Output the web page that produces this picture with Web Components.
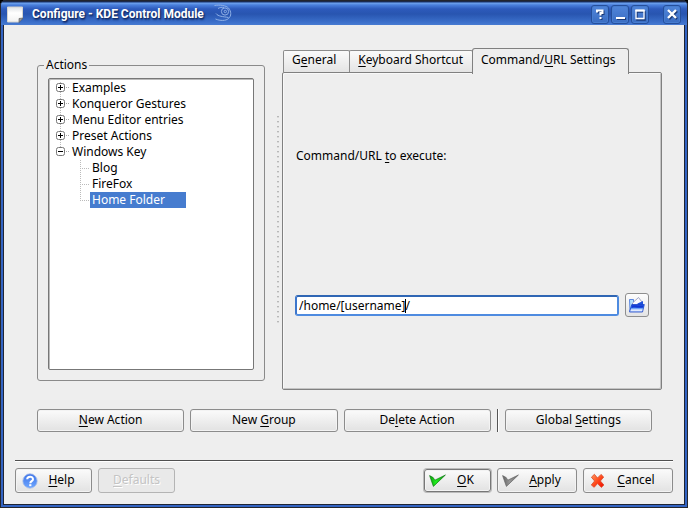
<!DOCTYPE html>
<html lang="en">
<head>
<meta charset="utf-8">
<title>Configure - KDE Control Module</title>
<style>
  html, body { margin: 0; }
  body { background: #000; font: 12px/16px "Noto Sans", "Open Sans", sans-serif; color: #000; }
  u { text-underline-offset: 2px; text-decoration-thickness: 1px; text-decoration-skip-ink: none; }
</style>
</head>
<body>
<kde-window>
  <span slot="title">Configure - KDE Control Module</span>
  <kde-workspace>
    <kde-group>
      <span slot="legend">Actions</span>
      <kde-tree>
        <kde-node state="closed" first>Examples</kde-node>
        <kde-node state="closed">Konqueror Gestures</kde-node>
        <kde-node state="closed">Menu Editor entries</kde-node>
        <kde-node state="closed">Preset Actions</kde-node>
        <kde-node state="open" last>Windows Key
          <kde-leaf slot="children">Blog</kde-leaf>
          <kde-leaf slot="children">FireFox</kde-leaf>
          <kde-leaf slot="children" selected>Home Folder</kde-leaf>
        </kde-node>
      </kde-tree>
    </kde-group>
    <kde-splitter></kde-splitter>
    <kde-tabs>
      <kde-tab slot="tab">G<u>e</u>neral</kde-tab>
      <kde-tab slot="tab"><u>K</u>eyboard Shortcut</kde-tab>
      <kde-tab slot="tab" active>Command/<u>U</u>RL Settings</kde-tab>
      <kde-url-field></kde-url-field>
    </kde-tabs>
  </kde-workspace>
  <kde-actions>
    <kde-button><u>N</u>ew Action</kde-button>
    <kde-button>New <u>G</u>roup</kde-button>
    <kde-button>De<u>l</u>ete Action</kde-button>
    <kde-button slot="end">Global <u>S</u>ettings</kde-button>
  </kde-actions>
  <kde-footer>
    <kde-button size="m" icon="help"><u>H</u>elp</kde-button>
    <kde-button size="m" disabled><u>D</u>efaults</kde-button>
    <kde-button slot="end" size="s" icon="ok" default><u>O</u>K</kde-button>
    <kde-button slot="end" size="m" icon="apply"><u>A</u>pply</kde-button>
    <kde-button slot="end" size="l" icon="cancel"><u>C</u>ancel</kde-button>
  </kde-footer>
</kde-window>

<script>
const define = (name, html, setup) => {
  const template = document.createElement('template');
  template.innerHTML = '<style>*{box-sizing:border-box}:host{box-sizing:border-box}</style>' + html;
  customElements.define(name, class extends HTMLElement {
    constructor() {
      super();
      this.attachShadow({ mode: 'open' }).append(template.content.cloneNode(true));
    }
    connectedCallback() { if (setup) setup(this, this.shadowRoot); }
  });
};

const ICONS = {
  help: `<svg width="16" height="16" viewBox="0 0 16 16"><defs><linearGradient id="g" x2="0" y2="1"><stop stop-color="#3f74e8"/><stop offset="1" stop-color="#6ea6ff"/></linearGradient></defs>
    <circle cx="8" cy="8" r="7.2" fill="url(#g)" stroke="#a9bfe8" stroke-width=".8"/>
    <path d="M5.2 6.3C5.2 2.9 11 3 11 6.2 11 8.2 8.3 8.1 8.3 10.2" fill="none" stroke="#fff" stroke-width="2"/><rect x="7.2" y="11.2" width="2.2" height="2" fill="#fff"/></svg>`,
  ok: `<svg width="18" height="16" viewBox="0 0 18 16"><defs><linearGradient id="g" x2="1"><stop stop-color="#0c9c10"/><stop offset=".4" stop-color="#1ff01c"/><stop offset="1" stop-color="#109414"/></linearGradient></defs>
    <path d="M.6 2.600 4.200 4.600 5.800 7.200 16.400 2 4.400 13.400Z" fill="url(#g)" stroke="#0b7d10" stroke-width=".7"/></svg>`,
  apply: `<svg width="18" height="16" viewBox="0 0 18 16"><defs><linearGradient id="g" x2="1"><stop stop-color="#626262"/><stop offset=".45" stop-color="#979797"/><stop offset="1" stop-color="#6a6a6a"/></linearGradient></defs>
    <path d="M.6 2.600 4.200 4.600 5.800 7.200 16.400 2 4.400 13.400Z" fill="url(#g)" stroke="#666" stroke-width=".7"/></svg>`,
  cancel: `<svg width="16" height="16" viewBox="0 0 16 16"><defs><linearGradient id="g" x2="1" y2="1"><stop stop-color="#ff9a62"/><stop offset=".5" stop-color="#ff4a1c"/><stop offset="1" stop-color="#f00800"/></linearGradient></defs>
    <path d="M1.400 4.200 4.400 1.300 7.500 5 11 1.400 13.700 4 10.400 8 13.900 12 11.300 14.400 7.500 10.600 4.200 14.300 1.300 12 4.600 8Z" fill="url(#g)" stroke="#d84a28" stroke-width=".8"/></svg>`
};

define('kde-window', `<style>
  :host { display: flex; flex-direction: column; min-height: 100vh; border-radius: 6px 6px 0 0; overflow: hidden;
    background: #3263c2; padding: 0 3px 3px; box-shadow: inset 1px 0 #25262c, inset -1px 0 #25262c, inset 0 -1px #25262c, inset 0 2px #20304f; }
  header { display: flex; align-items: center; height: 25px; margin: 0 -2px; padding: 3px 6px 0 6px; flex: none;
    border-radius: 5px 5px 0 0; background: linear-gradient(#22252e 0 1px, #14306e 2px, #70a4ee 3px, #4a80dc 5px, #2d5abb 9px, #2855b0 14px, #3b6fca 22px, #477bd2 25px); }
  h1 { margin: 0 10px 0 8px; font: bold 12px/18px Roboto, sans-serif; color: #fff; text-shadow: 1px 1px 1px #142c66, 1px 2px 2px #173578; white-space: nowrap; }
  h1 + svg { margin-top: -2px; }
  .controls { margin-left: auto; display: flex; gap: 2px; }
  .controls button { width: 18px; height: 19px; padding: 0; border: 1px solid #254f9c; border-radius: 3px; display: grid; place-items: center;
    background: linear-gradient(#5085da, #3a6dc2); box-shadow: inset 0 0 0 1px #477dd0; }
  .controls button:last-child { margin-left: 12px; }
  svg { display: block; flex: none; }
  main { flex: 1; display: flex; flex-direction: column; border: 1px solid #1e2434; border-top: 0; background: #eee; min-width: 0; }
</style>
<header>
  <svg width="17" height="17" viewBox="0 0 17 17"><defs><linearGradient id="p" x2="0" y2="1"><stop stop-color="#dfe1e4"/><stop offset=".4" stop-color="#fff"/><stop offset="1" stop-color="#f1f1f1"/></linearGradient></defs><path d="M.5 1H15.500V12L12 16H.5Z" fill="url(#p)" stroke="#d5d4cf"/><path d="M16 12 12 16.500V12.500Z" fill="#999" stroke="#555" stroke-width=".6"/></svg>
  <h1><slot name="title"></slot></h1>
  <svg width="18" height="18" viewBox="0 0 18 18" fill="none" stroke="#8fb0e6"><path d="M.5 1.500C6 .5 12 1.500 14.500 4 17.500 7.500 17.500 12 14.500 14.500 12 17 6 17 1.500 15M4 4.500C5.500 3.500 8 3 10 3.500M2 9.500C4 12.500 9 12.500 14.500 13.500"/><circle cx="11" cy="7.500" r="3.600"/><circle cx="11.300" cy="7.500" r="1.200"/></svg>
  <div class="controls">
    <button aria-label="Help"><svg width="14" height="14" viewBox="0 0 14 14" fill="none"><path d="M4 5.500V3.500H9.500V6H7.500V8.500M7.500 10V12" transform="translate(1 1)" stroke="#1b3b78" stroke-width="2"/><path d="M4 5.500V3.500H9.500V6H7.500V8.500M7.500 10V12" stroke="#fff" stroke-width="2"/></svg></button>
    <button aria-label="Minimize"><svg width="14" height="14" viewBox="0 0 14 14"><path d="M4 11H13V13H4Z" fill="#1b3b78"/><path d="M3 10H12V12H3Z" fill="#fff"/></svg></button>
    <button aria-label="Maximize"><svg width="14" height="14" viewBox="0 0 14 14" fill="none"><path d="M4 5H12V13H4Z" stroke="#1b3b78" stroke-width="1.500"/><path d="M3 3.500H11V11.500H3Z" stroke="#fff" stroke-width="1.300"/><path d="M2.400 3.500H11.600" stroke="#fff" stroke-width="2"/></svg></button>
    <button aria-label="Close"><svg width="14" height="14" viewBox="0 0 14 14" fill="none"><path d="M4 4 12 12M12 4 4 12" stroke="#1b3b78" stroke-width="2.500"/><path d="M3 3 11 11M11 3 3 11" stroke="#fff" stroke-width="2.400"/></svg></button>
  </div>
</header>
<main><slot></slot></main>`);

define('kde-workspace', `<style>
  :host { display: flex; flex: 1; padding: 22px 22px 0 33px; min-width: 0; }
</style><slot></slot>`);

define('kde-group', `<style>
  :host { display: flex; flex: 228 1 0; min-width: 0; padding: 10px 0 9px; }
  fieldset { flex: 1; display: flex; min-width: 0; margin: 0; padding: 5px 10px 10px; border: 1px solid #8a8a8a; border-radius: 3px; }
  legend { padding: 0 2px; margin-left: -4px; }
  ::slotted(kde-tree) { flex: 1; }
</style><fieldset><legend><slot name="legend"></slot></legend><slot></slot></fieldset>`);

define('kde-tree', `<style>
  :host { display: block; min-width: 0; background: #fff; border: 1px solid #777; border-radius: 2px; box-shadow: inset 1px 1px #bbb; padding: 1px 0; }
</style><div role="tree"><slot></slot></div>`);

define('kde-node', `<style>
  :host { display: block; white-space: nowrap; }
  .row { display: grid; grid-template-columns: 23px 1fr; align-items: center; height: 16px;
    background: repeating-linear-gradient(#bbb 0 1px, transparent 1px 2px) 11px 0 / 1px 100% no-repeat; }
  :host([first]) .row { background-position: 11px 2px; }
  :host([last]) .row { background-size: 1px 8px; }
  svg { margin-left: 7px; display: block; }
  .kids { padding-left: 31px; }
</style>
<div role="treeitem"><div class="row">
  <svg width="14" height="10" viewBox="0 0 14 10"><rect x=".5" y=".5" width="8" height="8" rx="2" fill="#fff" stroke="#777"/><path d="M2 4.500H7" stroke="#000"/><path class="plus" d="M4.500 2V7" stroke="#000"/><path d="M10 4.500H14" stroke="#aaa" stroke-dasharray="1 1"/></svg>
  <span><slot></slot></span></div>
  <div class="kids" role="group"><slot name="children"></slot></div></div>`,
(host, root) => {
  const open = host.getAttribute('state') === 'open';
  root.querySelector('[role=treeitem]').setAttribute('aria-expanded', open);
  if (open) root.querySelector('.plus')?.remove();
});

define('kde-leaf', `<style>
  :host { display: flex; height: 16px; }
  i { width: 10px; background: repeating-linear-gradient(#bbb 0 1px, transparent 1px 2px) 0 0 / 1px 100% no-repeat,
      repeating-linear-gradient(90deg, #bbb 0 1px, transparent 1px 2px) 0 8px / 100% 1px no-repeat; }
  :host([selected]) i { background-size: 1px 8px, 100% 1px; }
  span { width: 96px; padding-left: 2px; }
  :host([selected]) span { background: #467ccf; color: #fff; }
</style><i></i><span role="treeitem"><slot></slot></span>`);

define('kde-splitter', `<style>
  :host { flex: none; width: 17px; display: flex; justify-content: center; padding: 69px 0 0 9px; }
  div { width: 2px; height: 208px; background: linear-gradient(#b4b4b4, #b4b4b4) 0 0 / 1px 2px repeat-y, linear-gradient(#b4b4b4 0 1px, transparent 1px) 0 0 / 2px 5px;
    background: linear-gradient(#b8b8b8 0 1px, #dadada 1px 2px, transparent 2px) 0 0 / 2px 5px; }
</style><div role="separator" aria-orientation="vertical"></div>`);

define('kde-tabs', `<style>
  :host { flex: 380 1 0; min-width: 0; display: flex; flex-direction: column; }
  nav { display: flex; align-items: flex-end; height: 25px; padding-left: 1px; }
  section { flex: 1; border: 1px solid #808080; box-shadow: inset 1px 1px #f8f8f8, inset -1px -1px #c4c4c4; border-radius: 2px; }
</style><nav role="tablist"><slot name="tab"></slot></nav><section role="tabpanel"><slot></slot></section>`);

define('kde-tab', `<style>
  :host { display: block; flex: none; height: 22px; margin-right: -1px; }
  button { display: block; height: 100%; padding: 0 13px 3px 8px; border: 1px solid #8c8c8c; border-bottom: 0; border-radius: 2px 2px 0 0;
    font: inherit; color: inherit; background: linear-gradient(#fafafa, #e4e4e4); white-space: nowrap; }
  :host(:nth-child(2)) button { padding-right: 9px; }
  :host([active]) { height: 26px; margin-bottom: -2px; position: relative; }
  :host([active]) button { background: #eee; border-color: #808080; padding: 0 12px 4px 8px; border-radius: 3px 3px 0 0; }
</style><button role="tab"><slot></slot></button>`,
(host, root) => root.querySelector('button').setAttribute('aria-selected', host.hasAttribute('active')));

define('kde-url-field', `<style>
  :host { display: block; padding: 75px 12px 71px; }
  label { display: block; padding-left: 1px; margin-bottom: 129px; }
  u { text-underline-offset: 2px; text-decoration-skip-ink: none; }
  .row { display: flex; align-items: center; gap: 6px; }
  input { flex: 1; min-width: 0; height: 21px; padding: 0 2px; font: inherit; color: #000; border: 2px solid #4e8be0; border-top-color: #2f66b4; border-left-color: #3c76cc; border-radius: 3px; outline: 0;
    background: linear-gradient(#000, #000) 108px 2px / 1px 14px no-repeat #fff; }
  button { width: 24px; height: 24px; padding: 0; display: grid; place-items: center; border: 1px solid #8e8e8e; border-radius: 3px; background: linear-gradient(#fdfdfd, #e4e4e4); }
</style>
<label for="url">Command/URL <u>t</u>o execute:</label>
<div class="row"><input id="url" value="/home/[username]/">
<button aria-label="Browse"><svg width="18" height="18" viewBox="0 0 18 18"><defs><linearGradient id="f" x2="0" y2="1"><stop stop-color="#1a4fe0"/><stop offset=".45" stop-color="#3f86f4"/><stop offset=".75" stop-color="#eef4ff"/><stop offset="1" stop-color="#a8c4fa"/></linearGradient></defs>
<path d="M1.500 3.500H5.500V8L2 15Z" fill="#b4e0fc" stroke="#3c6fdc" stroke-width=".8"/><path d="M4.500 7 10.500 1.500 14 6V10H4.500Z" fill="#fbfbff" stroke="#8a90b8" stroke-width=".8"/><path d="M9.500 7.500 15 5V9H9.500Z" fill="#1d50dc"/><path d="M3.800 8.500H16.300L14.500 16H1.500Z" fill="url(#f)" stroke="#1a44c8" stroke-width=".8"/><path d="M4 9.500C8 8.500 10 10 15.500 9.500L15 11.500C10 12.500 8 10.500 3.500 12Z" fill="#1238d4"/></svg></button></div>`);

define('kde-button', `<style>
  :host { display: block; flex: 1 1 0; min-width: 0; }
  :host([size]) { flex: none; width: 77px; }
  :host([size=s]) { width: 67px; }
  :host([size=l]) { width: 90px; }
  :host([icon=apply]) { width: 80px; }
  button { width: 100%; height: 23px; display: flex; align-items: center; padding: 0 6px; border: 1px solid #8c8c8c; border-radius: 3px;
    font: inherit; color: #000; background: linear-gradient(#fbfbfb, #e2e2e2); box-shadow: inset 0 0 0 1px #f3f3f3; white-space: nowrap; }
  :host([size]) button { height: 25px; }
  :host([size=s]) button, :host([icon=apply]) button { padding-left: 4px; }
  span { flex: 1; text-align: center; padding-bottom: 1px; }
  svg { display: block; flex: none; }
  :host([default]) button { border-color: #777; box-shadow: 0 0 0 1px #bbb, inset 0 0 0 1px #f3f3f3; height: 23px; margin: 1px 0; }
  button:disabled { color: #c4c4c4; text-shadow: 1px 1px #fff; border-color: #b4b4b4; background: #e9e9e9; box-shadow: none; }
</style><button><span><slot></slot></span></button>`,
(host, root) => {
  const button = root.querySelector('button');
  button.disabled = host.hasAttribute('disabled');
  const icon = ICONS[host.getAttribute('icon')];
  if (icon && !root.querySelector('svg')) button.insertAdjacentHTML('afterbegin', icon);
});

define('kde-actions', `<style>
  :host { display: flex; gap: 6px; padding: 19px 32px 28px 33px; }
  hr { width: 2px; height: 23px; margin: 0; border: 0; border-left: 1px solid #555; background: #fff; flex: none; }
</style><slot></slot><hr><slot name="end"></slot>`);

define('kde-footer', `<style>
  :host { display: flex; gap: 6px; margin: 0 11px; padding: 7px 0 11px; border-top: 1px solid #505050; box-shadow: inset 0 1px #fff; }
  div { flex: 1; margin: 0 -6px 0 0; }
</style><slot></slot><div></div><slot name="end"></slot>`);
</script>
</body>
</html>
